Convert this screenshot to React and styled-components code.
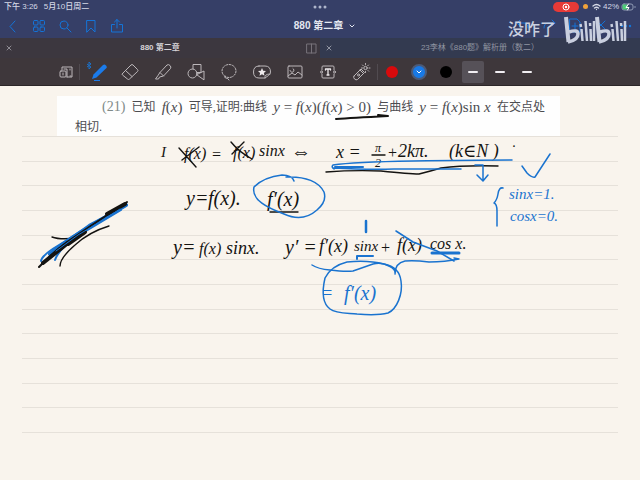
import React from "react";
import styled, { createGlobalStyle } from "styled-components";

const BLUE = "#1474d8";
const INK = "#141311";
const INK_BLUE = "#1a73cf";

const GlobalStyle = createGlobalStyle`
  * { box-sizing: border-box; }
  html, body { margin: 0; background: #f9f4ed; }
  body { font-family: "Liberation Sans", "Noto Sans CJK SC", sans-serif; }
  button { font: inherit; color: inherit; background: none; border: 0; padding: 0; }
`;

const Shell = styled.div`
  min-height: 100vh;
  display: flex;
  flex-direction: column;
`;

const Header = styled.header`
  position: relative;
  height: 38px;
  background: #363f67;
  display: flex;
  flex-direction: column;
`;

const StatusBar = styled.div`
  display: grid;
  grid-template-columns: 1fr auto 1fr;
  align-items: center;
  height: 13px;
  padding: 0 4px;
  font-size: 8px;
  line-height: 12px;
  font-weight: 500;
  color: #d5d9e6;
`;

const StatusGroup = styled.div`
  display: flex;
  align-items: center;
  gap: ${(p) => p.$gap}px;
  justify-content: ${(p) => (p.$end ? "flex-end" : "flex-start")};
`;

const RecordPill = styled.span`
  display: flex;
  justify-content: center;
  align-items: center;
  width: 26px;
  height: 10px;
  border-radius: 5px;
  background: #e73a37;
`;

const OrangeDot = styled.span`
  width: 5px;
  height: 5px;
  margin: 0 2px 0 2px;
  border-radius: 50%;
  background: #f0a23a;
`;

const NavBar = styled.nav`
  display: grid;
  grid-template-columns: 1fr auto 1fr;
  align-items: center;
  height: 25px;
  color: ${BLUE};
`;

const NavGroup = styled.div`
  display: flex;
  justify-content: ${(p) => (p.$end ? "flex-end" : "flex-start")};
`;

const NavButton = styled.button`
  display: flex;
  justify-content: center;
  align-items: center;
  width: 26px;
  height: 22px;
`;

const DocTitle = styled.button`
  display: flex;
  align-items: center;
  gap: 6px;
  padding-left: 9px;
  font-size: 10px;
  line-height: 16px;
  font-weight: 600;
  color: #e4e7f0;
`;

const Watermark = styled.div`
  position: absolute;
  top: 15px;
  right: 13px;
  display: flex;
  align-items: center;
  gap: 7px;
  font-size: 16px;
  line-height: 30px;
  font-weight: 500;
  color: #c9cfdf;
  pointer-events: none;
`;

const Tabs = styled.div`
  display: grid;
  grid-template-columns: 1fr 1fr;
  height: 20px;
  background: #3c373f;
  font-size: 8px;
`;

const Tab = styled.div`
  display: grid;
  grid-template-columns: 18px 1fr 18px;
  align-items: center;
  color: ${(p) => (p.$active ? "#d6d3d8" : "#9195a2")};
  font-weight: ${(p) => (p.$active ? 600 : 400)};
  background: ${(p) => (p.$active ? "#3c373f" : "#333a50")};
`;

const TabButton = styled.button`
  display: flex;
  justify-content: center;
  align-items: center;
  line-height: 16px;
  color: ${(p) => (p.$dim ? "#8f8c93" : "inherit")};
`;

const ToolBar = styled.div`
  display: flex;
  justify-content: center;
  align-items: center;
  height: 28px;
  padding-right: 47px;
  background: #3e373b;
  border-bottom: 1px solid #2c2628;
  color: #bcb7ba;
`;

const Tool = styled.button`
  display: flex;
  justify-content: center;
  align-items: center;
  width: ${(p) => p.$w || 33}px;
  height: 24px;
`;

const Divider = styled.span`
  width: 1px;
  height: 16px;
  background: #514b50;
`;

const Swatch = styled.span`
  display: flex;
  justify-content: center;
  align-items: center;
  width: ${(p) => (p.$active ? 16 : 12)}px;
  height: ${(p) => (p.$active ? 16 : 12)}px;
  border-radius: 50%;
  background: ${(p) => p.$color};
  border: ${(p) => (p.$active ? "2px solid #4b5a78" : "0")};
`;

const Thickness = styled.span`
  display: flex;
  justify-content: center;
  align-items: center;
  width: 22px;
  height: 22px;
  border-radius: 2px;
  background: ${(p) => (p.$active ? "#565158" : "transparent")};
  &::after {
    content: "";
    width: 10px;
    height: 2px;
    border-radius: 1px;
    background: #f1eef2;
  }
`;

const Page = styled.main`
  position: relative;
  flex: 1;
  padding-top: 10px;
  background: #f9f4ed;
`;

const Clip = styled.section`
  margin: 0 80px 0 57px;
  height: 40px;
  padding: 1px 15px 0 18px;
  background: #fefefe;
  font-family: "Liberation Serif", "Noto Sans CJK SC", serif;
  font-size: 12px;
  line-height: 20px;
  color: #4c4c50;
`;

const ClipLine = styled.p`
  display: flex;
  justify-content: space-between;
  margin: 0;
  padding-left: ${(p) => (p.$indent ? 27 : 0)}px;
  white-space: pre;
`;

const Num = styled.span`
  font-size: 14px;
  color: #7f8a88;
`;

const Formula = styled.span`
  font-size: 15px;
`;

const Rules = styled.div`
  display: flex;
  flex-direction: column;
  justify-content: space-between;
  height: 297px;
  margin: 0 22px;
`;

const Rule = styled.span`
  height: 1px;
  background: #e6e1da;
`;

const InkLayer = styled.svg`
  position: absolute;
  top: 0;
  left: 0;
  width: 100%;
  fill: none;
  stroke-linecap: round;
  stroke-linejoin: round;
`;

const Hand = styled.text`
  font-family: "Liberation Serif", "DejaVu Serif", serif;
  font-style: italic;
  font-size: ${(p) => p.$size || 18}px;
  fill: ${(p) => (p.$blue ? INK_BLUE : INK)};
  stroke: none;
`;

const Icon = ({ w = 16, h = 16, sw = 1, children }) => (
  <svg width={w} height={h} viewBox={`0 0 ${w} ${h}`} fill="none" stroke="currentColor"
    strokeWidth={sw} strokeLinecap="round" strokeLinejoin="round" aria-hidden="true">
    {children}
  </svg>
);

const leftNav = [
  ["Back", <path d="M10 3 5 8.500 10 14" />],
  ["Thumbnails", <><rect x="2.500" y="2.500" width="4.500" height="4.500" rx="1" /><rect x="9" y="2.500" width="4.500" height="4.500" rx="1" /><rect x="2.500" y="9" width="4.500" height="4.500" rx="1" /><rect x="9" y="9" width="4.500" height="4.500" rx="1" /></>],
  ["Search", <><circle cx="7" cy="7" r="4" /><path d="m10 10 4 4" /></>],
  ["Bookmark", <path d="M4 2.500h8v11.500l-4-4-4 4z" />],
  ["Share", <path d="M5.500 6.500h-3v7.500h11V6.500h-3M8 10V1.500M5.500 4 8 1.500 10.500 4" />],
];

const rightNav = [
  ["Undo", <path d="M5 2 2 5l3 3M2 5h7q4 0 4 5" />],
  ["Redo", <path d="m11 2 3 3-3 3M14 5H7q-4 0-4 5" />],
  ["Add page", <path d="M3 1h7l3 3v10H3zM8 5v6M5 8h6" />],
  ["Pencil off", <path d="m4 3 8 8M12 3l-8 8" />],
  ["More", <g fill="currentColor" stroke="none"><circle cx="3" cy="8" r="1.200" /><circle cx="7" cy="8" r="1.200" /><circle cx="11" cy="8" r="1.200" /></g>],
];

const PenIcon = () => (
  <svg width="22" height="22" viewBox="0 0 22 22" fill="none" aria-hidden="true">
    <path d="m1 3 4 3-2 2V1l2 2-4 3" stroke="#1d6fc4" strokeWidth="1" />
    <path d="m6 18 1.500-4.500L17 4q1.500-1 3 .5t.5 2.500L10.500 16.500z" fill="#1b7bea" />
    <path d="M8 19.500h6" stroke="#1b7bea" strokeWidth="1" />
  </svg>
);

const tools = [
  ["Pen", <PenIcon />],
  ["Eraser", <Icon w={20} h={20}><path d="M2.500 11.500 11 3q1-1 2 0l4.500 4.500q1 1 0 2L9.500 17q-1 1-2 0L2.500 13q-1-.7 0-1.500zM5.500 8.500l6.500 6" /></Icon>],
  ["Highlighter", <Icon w={20} h={20}><path d="M7 10.500 14 3q1.500-1 3 .5t.5 3L10.500 14l-4 1-1 2H2.500L5 13.500zM7 10.500l3.500 3.500" /></Icon>],
  ["Shapes", <Icon w={20} h={20}><circle cx="6.500" cy="11.500" r="4.500" /><path d="M7 7V2.500h8v8h-4M11 12.500l7-3.500v8.500z" /></Icon>],
  ["Lasso", <Icon w={20} h={20}><ellipse cx="10" cy="9" rx="7" ry="6.500" strokeDasharray="2 1.500" /><path d="M6 14q-1 2 1 2t3 2" /></Icon>],
  ["Stickers", <Icon w={20} h={20}><path d="M7 4h6q5.500 0 5.500 6 0 2-2 3.500L13 16H7q-5.500 0-5.500-6T7 4zM13 16q-1-4 5-4" /><path d="m10 6 1.200 2.700 2.800.3-2.100 1.900.6 2.900-2.500-1.500-2.500 1.500.6-2.900L6 9l2.800-.3z" fill="#eeeaec" stroke="none" /></Icon>],
  ["Image", <Icon w={20} h={20}><rect x="3" y="4" width="14" height="12" rx="1" /><path d="m3 14 4-3 3 2 3-3 4 3M8 6.500a2 2 0 1 1-3 2" /></Icon>],
  ["Text box", <Icon w={20} h={20}><path d="M4 8V5q0-1 1-1h10q1 0 1 1v3M16 12v3q0 1-1 1H5q-1 0-1-1v-3" /><circle cx="3.500" cy="10" r="1" /><circle cx="16.500" cy="10" r="1" /><path d="M7.500 8V7h5v1M10 7v6M9 13h2" stroke="#eeeaec" strokeWidth="1.300" /></Icon>],
  ["Laser pointer", <Icon w={20} h={20}><path d="m3 14 7-7 3.500 3.500-7 7q-1.500 1-3-.5T3 14zM9 8l3.500 3.500" /><circle cx="7.500" cy="13" r="1" /><circle cx="14.500" cy="6" r="1.700" /><path d="M14.500 1.500v1M14.500 9.500v1M10.500 6h1M18 6h1M11.500 3l.7.7M17.500 3l-.7.7M17 8.500l.7.7" /></Icon>],
];

const BiliLogo = () => (
  <svg width="64" height="30" viewBox="0 0 64 30" fill="none" stroke="currentColor" aria-label="bilibili">
    {[0, 31].map((x) => (
      <g key={x} transform={`translate(${x} 0)`}>
        <path d="M3 2 5.500 27" strokeWidth="4" />
        <path d="M6 17q9-3 9 2 0 6-10 8" strokeWidth="3.500" />
        <path d="m18.500 14 1 12M27.500 14l.500 12" strokeWidth="2.500" />
        <path d="m22.500 6 1.500 20M31 6v20" strokeWidth="2.500" />
        <path d="m17.500 9 .5 3M27 8l.2 3" strokeWidth="2.500" />
      </g>
    ))}
  </svg>
);

const handwriting = [
  [161, 157, "I", 15], [184, 159, "f(x)", 16], [211, 160, "=", 16],
  [233, 158, "f(x)", 16], [259, 156, "sinx", 16], [291, 158, "⇔", 20],
  [336, 158, "x =", 18], [375, 152, "π", 12], [375, 167, "2", 12], [387, 158, "+", 16],
  [398, 157, "2kπ.", 18], [449, 157, "(k∈N )", 18], [512, 151, "·", 14],
  [186, 205, "y=", 20], [208, 205, "f(x).", 20],
  [267, 206, "f′(x)", 20],
  [173, 254, "y=", 20], [199, 254, "f(x)", 16], [226, 254, "sinx.", 18],
  [285, 254, "y′ =", 20], [319, 252, "f′(x)", 18],
  [354, 251, "sinx", 15], [380, 253, "+", 16], [397, 251, "f(x)", 18],
  [430, 249, "cos x.", 16],
];

const blueWriting = [
  [321, 299, "=", 18], [344, 300, "f′(x)", 20],
  [509, 199, "sinx=1.", 15], [510, 221, "cosx=0.", 15],
];

const Ink = () => (
  <InkLayer viewBox="0 86 640 394">
    {handwriting.map(([x, y, t, s]) => <Hand key={`${x}-${y}`} x={x} y={y} $size={s}>{t}</Hand>)}
    {blueWriting.map(([x, y, t, s]) => <Hand key={`${x}-${y}`} x={x} y={y} $size={s} $blue>{t}</Hand>)}
    <g stroke={INK} strokeWidth="1.400">
      <path d="M336 119q15-1 52-3l-10-1 6 1" strokeWidth="2" />
      <path d="M179 148 196 167M231 142q8 10 21 17M244 142 232 154M199 147l-17 13M372 155h13" />
      <path d="M326 172q27-2 55-1 28 3 38 3 12-3 22-6 23-3 57-2" />
      <path d="M270 212h28" />
      <path d="M52 237q8 3 25 1M60 266q0-8 15-21 14-13 34-19" />
    </g>
    <g>
      <path d="M41 261q1-6 18-16 17-10 30-20l38-20M55 260q4-12 26-26L121 210" stroke={INK_BLUE} strokeWidth="2" />
      <path d="M50 254Q70 238 96 223L126 205" stroke={INK_BLUE} strokeWidth="4" />
      <path d="M39 267 47 259q9-9 20-17l25-17 35-23" stroke={INK} strokeWidth="2" />
      <path d="M43 263 68 243M68 244l17-12M107 214l18-10" stroke={INK} strokeWidth="4" />
      <path d="m56 251 22-16 20-12 22-14" stroke={INK_BLUE} strokeWidth="1" />
    </g>
    <g stroke={INK_BLUE} strokeWidth="1.500">
      <path d="M294 181q-2-6-12-6-18 2-28 12c-3 13 14 21 30 27 13 6 24 4 33-4 7-6 9-12 7-18-5-10-18-16-38-15" />
      <path d="M333 165q20-3 80-4t99-1M334 168q35 2 60 1h67M333 165q-2 2 1 4" />
      <path d="M335 167h28" strokeWidth="2" />
      <path d="M475 165h8v14M477 175l6 6 5-6" />
      <path d="m522 166 5 7q5 5 8 4l15-23" />
      <path d="M503 188q-4-1-5 6-1 6-4 9 3 1 3 8v15" />
      <path d="M366 221v11" strokeWidth="2.500" />
      <path d="M357 259v-3h16" strokeWidth="2" />
      <path d="m396 231 17 11 24 9 17 10" />
      <path d="M432 253h27" strokeWidth="3" />
      <path d="M312 265q6 4 18 5 15 2 23 1l20-7q9-2 16 2 7 3 6 8 0-11 10-13 9-1 24 1 16 0 30-3l-5-1" />
      <path d="M347 262q-16 4-22 16c-3 13-3 25 5 31 6 5 18 4 27 5 12 1 23 1 31-1 9-4 15-19 13-32-1-9-7-15-17-17q-16-4-37-2" />
    </g>
  </InkLayer>
);

export default function App() {
  return (
    <Shell>
      <GlobalStyle />
      <Header>
        <StatusBar>
          <StatusGroup $gap={6}><span>下午 3:26</span><span>5月10日周二</span></StatusGroup>
          <Icon w={14} h={4}><g fill="#aeb5cb" stroke="none"><circle cx="2" cy="2" r="1.500" /><circle cx="7" cy="2" r="1.500" /><circle cx="12" cy="2" r="1.500" /></g></Icon>
          <StatusGroup $gap={2} $end>
            <RecordPill><Icon w={8} h={8}><circle cx="4" cy="4" r="3" stroke="#fff" /><circle cx="4" cy="4" r="1.200" fill="#fff" stroke="none" /></Icon></RecordPill>
            <OrangeDot />
            <Icon w={9} h={8} sw={1.3}><path d="M1 3q3.500-3 7 0M2.500 5q2-1.500 4 0M4.500 6.500v.1" /></Icon>
            <span>42%</span>
            <Icon w={15} h={8}><rect x="1" y="1" width="11" height="6" rx="2" stroke="#8f9bb5" /><rect x="1.500" y="1.500" width="5" height="5" rx="1" fill="#4dcc78" stroke="none" /><path d="M7.500 1 5 4.500h3L6.500 7" stroke="#fff" /><path d="M14 3.500v1" stroke="#8f9bb5" /></Icon>
          </StatusGroup>
        </StatusBar>
        <NavBar>
          <NavGroup>{leftNav.map(([n, d]) => <NavButton key={n} aria-label={n}><Icon>{d}</Icon></NavButton>)}</NavGroup>
          <DocTitle>880 第二章<Icon w={6} h={6}><path d="m1 2 2 2 2-2" /></Icon></DocTitle>
          <NavGroup $end>{rightNav.map(([n, d]) => <NavButton key={n} aria-label={n}><Icon>{d}</Icon></NavButton>)}</NavGroup>
        </NavBar>
        <Watermark><span>没咋了</span><BiliLogo /></Watermark>
      </Header>
      <Tabs>
        <Tab $active>
          <TabButton $dim aria-label="Close tab"><Icon w={6} h={6}><path d="m1 1 4 4M5 1 1 5" /></Icon></TabButton>
          <TabButton>880 第二章</TabButton>
          <TabButton $dim aria-label="Split view"><Icon w={11} h={11}><path d="M1 1h9v9H1zM5.500 1v9" stroke="#77727a" /></Icon></TabButton>
        </Tab>
        <Tab>
          <TabButton aria-label="Close tab"><Icon w={6} h={6}><path d="m1 1 4 4M5 1 1 5" /></Icon></TabButton>
          <TabButton>23李林《880题》解析册（数二）</TabButton>
        </Tab>
      </Tabs>
      <ToolBar>
        <Tool $w={26} aria-label="Zoom window"><Icon w={14} h={14}><path d="M3 5V2h10v10H8M11 4v1M11 11h1" /><rect x="1" y="6" width="6" height="6" rx="1" /><path d="M4 8v2M5 4h3v8" /></Icon></Tool>
        <Divider />
        {tools.map(([n, d]) => <Tool key={n} aria-label={n}>{d}</Tool>)}
        <Divider />
        <Tool $w={27} aria-label="Red"><Swatch $color="#d90a0c" /></Tool>
        <Tool $w={27} aria-label="Blue"><Swatch $active $color="#1879e6"><Icon w={6} h={6}><path d="m1 2 2 2 2-2" stroke="#fff" /></Icon></Swatch></Tool>
        <Tool $w={27} aria-label="Black"><Swatch $color="#000" /></Tool>
        <Tool $w={27} aria-label="Thin"><Thickness $active /></Tool>
        <Tool $w={27} aria-label="Medium"><Thickness /></Tool>
        <Tool $w={27} aria-label="Thick"><Thickness /></Tool>
      </ToolBar>
      <Page>
        <Clip>
          <ClipLine $indent>
            <Num>(21)</Num><span>已知</span><Formula><i>f</i>(<i>x</i>)</Formula><span>可导,证明:曲线</span>
            <Formula><i>y</i> = <i>f</i>(<i>x</i>)(<i>f</i>(<i>x</i>) &gt; 0)</Formula><span>与曲线</span>
            <Formula><i>y</i> = <i>f</i>(<i>x</i>)sin <i>x</i></Formula><span>在交点处</span>
          </ClipLine>
          <ClipLine><span>相切.</span></ClipLine>
        </Clip>
        <Rules>{Array.from({ length: 13 }, (_, i) => <Rule key={i} />)}</Rules>
        <Ink />
      </Page>
    </Shell>
  );
}
